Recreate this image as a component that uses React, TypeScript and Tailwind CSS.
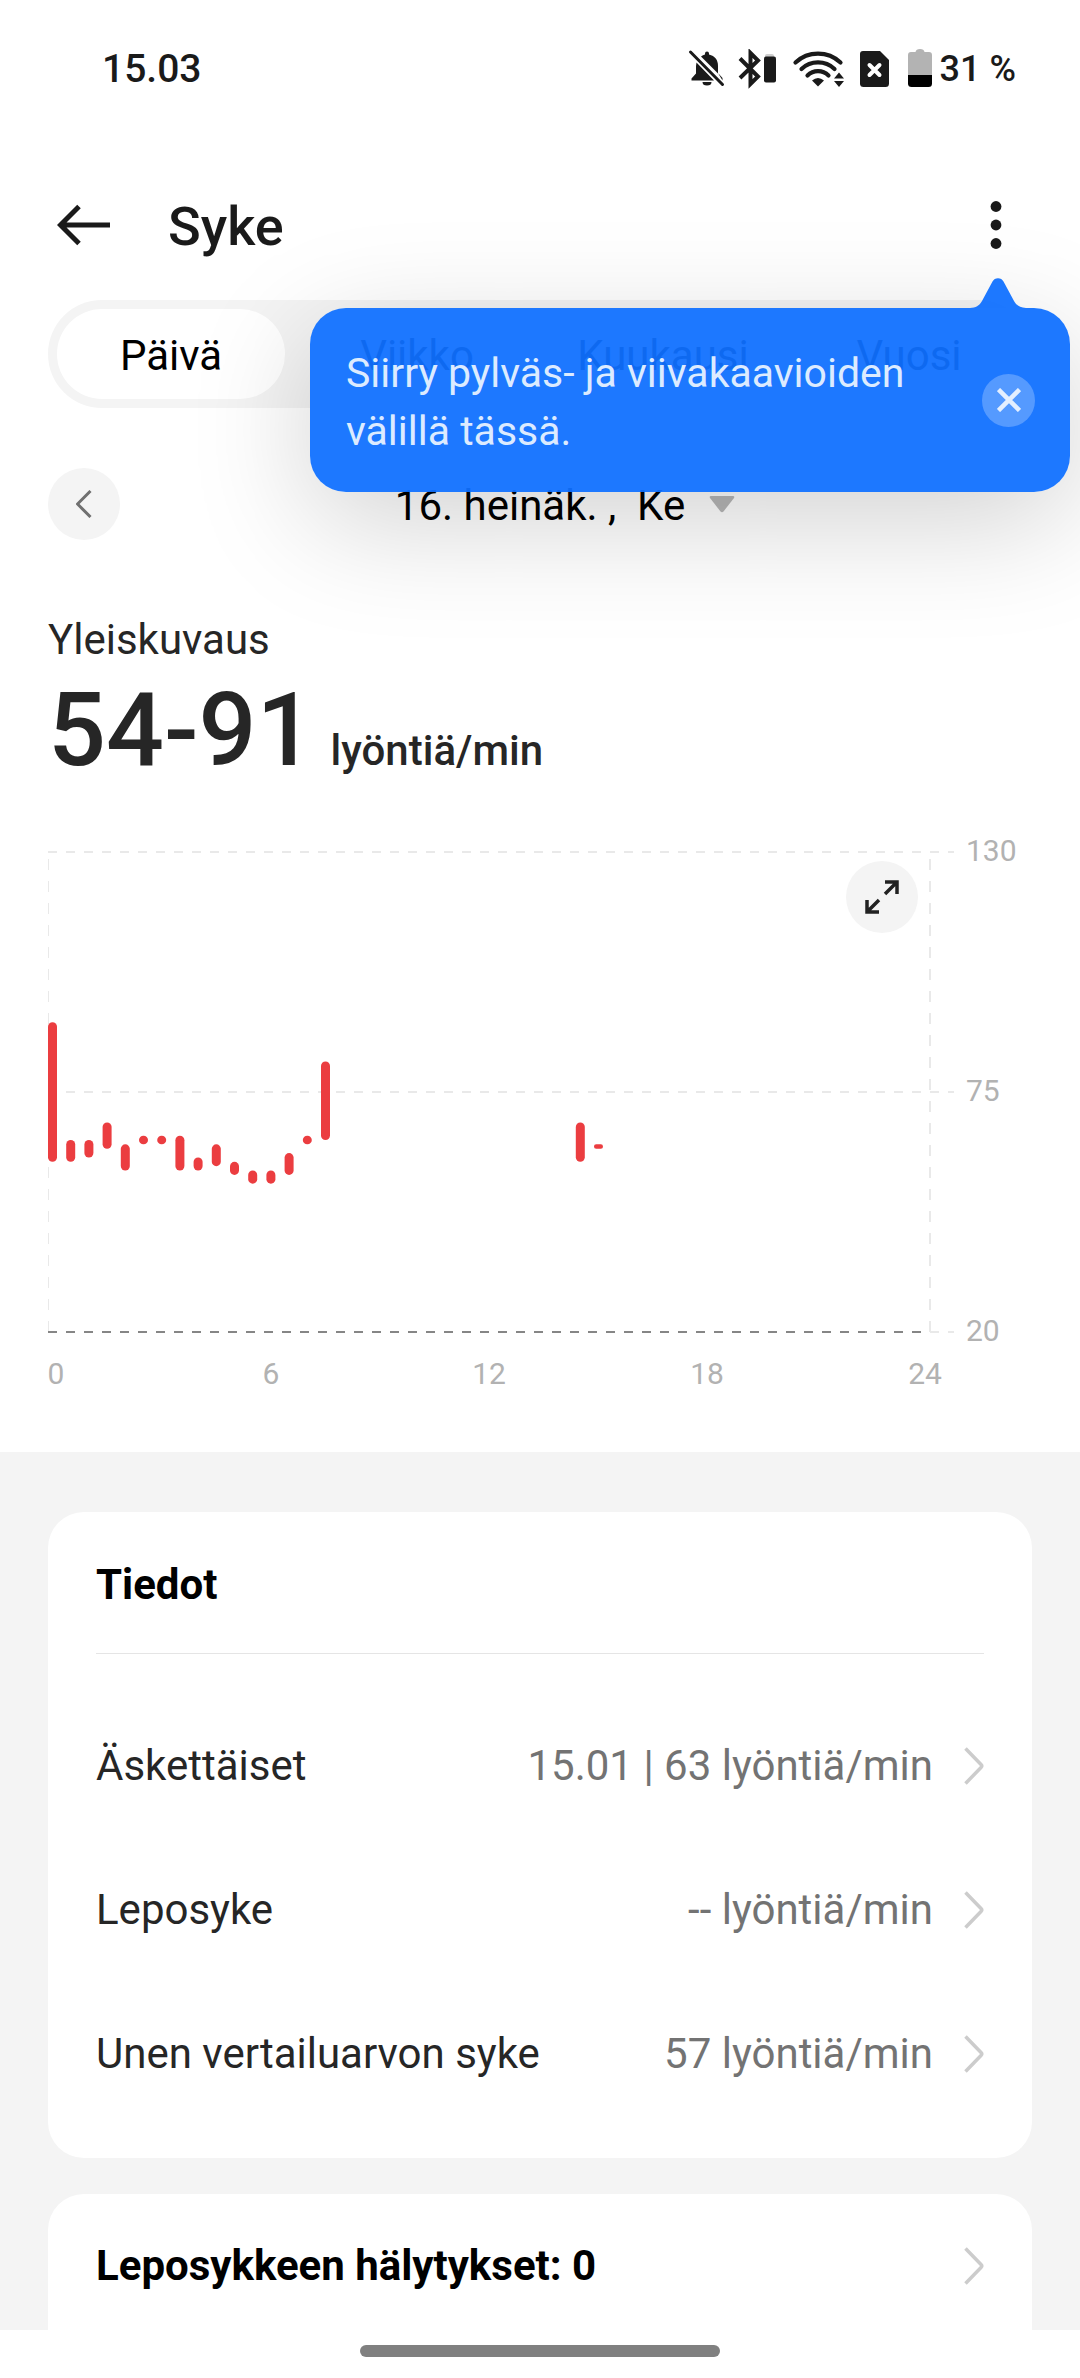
import React, { useState } from "react";

type Reading = { slot: number; max: number; min: number };

// One slot is half an hour
const readings: Reading[] = [
  { slot: 0, max: 91, min: 59 },
  { slot: 1, max: 64, min: 59 },
  { slot: 2, max: 64, min: 60 },
  { slot: 3, max: 68, min: 62 },
  { slot: 4, max: 63, min: 57 },
  { slot: 5, max: 65, min: 63 },
  { slot: 6, max: 65, min: 63 },
  { slot: 7, max: 65, min: 57 },
  { slot: 8, max: 60, min: 57 },
  { slot: 9, max: 63, min: 58 },
  { slot: 10, max: 59, min: 56 },
  { slot: 11, max: 57, min: 54 },
  { slot: 12, max: 57, min: 54 },
  { slot: 13, max: 61, min: 56 },
  { slot: 14, max: 65, min: 63 },
  { slot: 15, max: 82, min: 64 },
  { slot: 29, max: 68, min: 59 },
  { slot: 30, max: 63, min: 62 },
];

const tabs = ["Päivä", "Viikko", "Kuukausi", "Vuosi"];

const details = [
  { label: "Äskettäiset", value: "15.01 | 63 lyöntiä/min" },
  { label: "Leposyke", value: "-- lyöntiä/min" },
  { label: "Unen vertailuarvon syke", value: "57 lyöntiä/min" },
];

const CHART_TOP = 20;
const CHART_HEIGHT = 480;

const yFor = (bpm: number) => CHART_TOP + ((130 - bpm) / 110) * CHART_HEIGHT;
const xFor = (slot: number) => 4.5 + slot * 18.2;

function StatusBar() {
  return (
    <div className="flex h-[150px] items-center justify-between pr-16 pb-3 pl-[102px] font-medium text-[#1a1a1a]">
      <span className="text-[39px]">15.03</span>
      <div className="flex items-center text-[36px]">
        <svg width="245" height="40" viewBox="0 0 245 40" fill="#1a1a1a">
          {/* Muted bell */}
          <path d="M14 7.500 Q16 6 18 5.500 V4.500 a2 2 0 0 1 4 0 V5.500 C28 7 31 11 31 17 V24.500z" />
          <path d="M9.500 13.500 L27 31.500 H4.500 V29.500 L9 24.500 V17z" />
          <path d="M31 24 L35.500 29 V31.500z" />
          <path d="M15.500 33h9a4.500 3.500 0 0 1-9 0z" />
          <path d="M3.500 3 L35.500 35.500" stroke="#1a1a1a" strokeWidth="3" strokeLinecap="round" />
          {/* Bluetooth with device battery */}
          <path
            d="M53 9.500 L71 27.500 L63.500 35 V4 L71 11.500 L53 29"
            fill="none"
            stroke="#1a1a1a"
            strokeWidth="4"
          />
          <rect x="78" y="5" width="9" height="5" rx="2" fill="#cfcfcf" />
          <rect x="77" y="7.500" width="12" height="26" rx="2" />
          {/* Wifi */}
          <g fill="none" stroke="#1a1a1a" strokeWidth="4.200" strokeLinecap="round">
            <path d="M108.500 13.500 A33 33 0 0 1 153.500 13.500" />
            <path d="M114.500 20 A24 24 0 0 1 147.500 20" />
            <path d="M120.500 26.500 A15 15 0 0 1 141.500 26.500" />
          </g>
          <path d="M125 31.500 Q131 26.500 137 31.500 L131 37.500z" />
          <path d="M152 23.500 l5 6h-10z M152 38 l5-6h-10z" />
          {/* Sim card */}
          <path d="M176 2h17l9 9v23.500a3.500 3.500 0 0 1-3.500 3.500H176.500a3.500 3.500 0 0 1-3.500-3.500V5a3 3 0 0 1 3-3z" />
          <path d="M182.500 16 l10 10 M192.500 16 l-10 10" stroke="#fff" strokeWidth="4" strokeLinecap="round" />
          {/* Battery */}
          <path d="M221 26 V6a3 3 0 0 1 3-3h4.500q.5-3 4.500-3t4.500 3h4.500a3 3 0 0 1 3 3v20z" fill="#b3b3b3" />
          <path d="M221 26h24v8.500a3.500 3.500 0 0 1-3.500 3.500h-17a3.500 3.500 0 0 1-3.500-3.500z" fill="#000" />
        </svg>
        <span className="ml-2">31 %</span>
      </div>
    </div>
  );
}

function Tooltip({ onClose }: { onClose: () => void }) {
  return (
    <div
      role="tooltip"
      className="absolute top-[158px] right-2.5 flex w-[760px] items-center justify-between rounded-[36px] bg-[rgba(15,112,255,0.94)] pt-9 pr-[35px] pb-8 pl-9 shadow-[0_30px_120px_rgba(0,0,0,0.18)]"
    >
      <svg className="absolute right-[44px] bottom-full" width="56" height="30" viewBox="0 0 56 30">
        <path
          d="M0 30 C6 29.500 9 28 12 23 L22.500 3.500 C24.500 -1 31.500 -1 33.500 3.500 L44 23 C47 28 50 29.500 56 30z"
          fill="rgba(15,112,255,0.94)"
        />
      </svg>
      <p className="text-[41px] leading-[58px] text-[#dcebff]">
        Siirry pylväs- ja viivakaavioiden
        <br />
        välillä tässä.
      </p>
      <button
        type="button"
        aria-label="Sulje"
        onClick={onClose}
        className="mb-1 flex size-[53px] shrink-0 items-center justify-center rounded-full bg-white/25"
      >
        <svg width="24" height="24" viewBox="0 0 24 24" stroke="#e4efff" strokeWidth="4.500">
          <path d="M1.500 1.500 L22.500 22.500 M22.500 1.500 L1.500 22.500" />
        </svg>
      </button>
    </div>
  );
}

function HeartRateChart() {
  return (
    <div className="relative mt-[42px]">
      <svg viewBox="0 0 984 560" className="h-auto w-full" role="img" aria-label="Syke">
        <g stroke="#e9e9e9" strokeWidth="2" strokeDasharray="9 9">
          <path d="M0 20 H906" />
          <path d="M0 260 H906" />
          <path d="M882 500 H906" />
        </g>
        <g stroke="#e9e9e9" strokeDasharray="11 11">
          <path d="M0.500 27 V500" strokeWidth="1" />
          <path d="M882 27 V500" strokeWidth="2" />
        </g>
        <path d="M0 500 H873" stroke="#868686" strokeWidth="2" strokeDasharray="9 9" />

        {readings.map((r) => {
          const height = yFor(r.min) - yFor(r.max);
          return (
            <rect
              key={r.slot}
              x={xFor(r.slot) - 4.5}
              y={yFor(r.max)}
              width="9"
              height={height}
              rx={Math.min(4.5, height / 2)}
              fill="#eb3d40"
            />
          );
        })}

        <g fontSize="30" fill="#b2b2b2">
          <text x="918" y="29">130</text>
          <text x="918" y="269">75</text>
          <text x="918" y="509">20</text>
        </g>
        <g fontSize="30" fill="#b2b2b2" textAnchor="middle">
          <text x="8" y="552">0</text>
          <text x="223" y="552">6</text>
          <text x="441" y="552">12</text>
          <text x="659" y="552">18</text>
          <text x="877" y="552">24</text>
        </g>
      </svg>
      <button
        type="button"
        aria-label="Laajenna"
        className="absolute top-[29px] right-[114px] flex size-[72px] items-center justify-center rounded-full bg-[#f4f4f4]"
      >
        <svg width="34" height="34" viewBox="0 0 34 34" fill="none" stroke="#222" strokeWidth="3.500">
          <path d="M20 2 H32 V14 M32 2 L20 14" />
          <path d="M2 20 V32 H14 M2 32 L14 20" />
        </svg>
      </button>
    </div>
  );
}

function Chevron() {
  return (
    <svg className="shrink-0" width="20" height="38" viewBox="0 0 20 38" fill="none" stroke="#cccccc" strokeWidth="3.500">
      <path d="M1.500 1.500 L17 17.500 Q18.500 19 17 20.500 L1.500 36.500" />
    </svg>
  );
}

export default function App() {
  const [activeTab, setActiveTab] = useState("Päivä");
  const [showTip, setShowTip] = useState(true);

  return (
    <div className="flex min-h-screen flex-col bg-white font-[Roboto,sans-serif] text-[42px] leading-[50px] text-[#262626]">
      <StatusBar />

      <header className="relative z-10 flex h-[150px] items-center pr-[72px] pl-[57px]">
        <button type="button" aria-label="Takaisin">
          <svg width="54" height="42" viewBox="0 0 54 42" fill="none" stroke="#1a1a1a" strokeWidth="5">
            <path d="M53 21 H5 M22 2.500 L3.500 21 L22 39.500" />
          </svg>
        </button>
        <h1 className="ml-[57px] grow pt-1 text-[54px] leading-[64px] font-medium text-[#1a1a1a]">Syke</h1>
        <button type="button" aria-label="Valikko">
          <svg width="24" height="54" viewBox="0 0 24 54" fill="#1a1a1a">
            <circle cx="12" cy="8.500" r="5.400" />
            <circle cx="12" cy="27" r="5.400" />
            <circle cx="12" cy="45.500" r="5.400" />
          </svg>
        </button>
        {showTip && <Tooltip onClose={() => setShowTip(false)} />}
      </header>

      <main className="flex grow flex-col">
        <section className="px-12 pb-[60px]">
          <div role="tablist" className="flex gap-[18px] rounded-full bg-[#f4f4f4] p-[9px] text-black">
            {tabs.map((tab) => (
              <button
                key={tab}
                type="button"
                role="tab"
                aria-selected={activeTab === tab}
                onClick={() => setActiveTab(tab)}
                className={
                  activeTab === tab
                    ? "h-[90px] flex-1 basis-0 rounded-full bg-white pt-1"
                    : "h-[90px] flex-1 basis-0 rounded-full pt-1"
                }
              >
                {tab}
              </button>
            ))}
          </div>

          {/* Date picker */}
          <div className="mt-[60px] grid grid-cols-[72px_1fr_72px] items-center">
            <button
              type="button"
              aria-label="Edellinen päivä"
              className="flex size-[72px] items-center justify-center rounded-full bg-[#f4f4f4]"
            >
              <svg width="16" height="28" viewBox="0 0 16 28" fill="none" stroke="#707070" strokeWidth="3">
                <path d="M14.500 1 L1.500 14 L14.500 27" />
              </svg>
            </button>
            <button type="button" className="flex items-center justify-center pl-[50px] text-black">
              <span className="pt-1 whitespace-pre">16. heinäk. ,  Ke</span>
              <svg className="ml-6" width="26" height="18" viewBox="0 0 26 18" fill="#b8b8b8">
                <path d="M2 1h22q2 0 1 2L14.500 16.500q-1.500 1.500-3 0L1 3q-1-2 1-2z" />
              </svg>
            </button>
          </div>

          <p className="mt-[75px]">Yleiskuvaus</p>
          <p className="mt-[5px] flex items-baseline gap-4 font-medium">
            <span className="text-[102px] leading-[120px]">54-91</span>
            <span>lyöntiä/min</span>
          </p>

          <HeartRateChart />
        </section>

        <div className="grow bg-[#f4f4f4] px-12 pt-[60px]">
          <section className="rounded-[36px] bg-white px-12 pb-8">
            <h2 className="flex h-[142px] items-center border-b border-[#e5e5e5] pt-1 font-bold text-black">Tiedot</h2>
            <ul className="pt-10">
              {details.map((item) => (
                <li key={item.label}>
                  <a href="#" className="flex h-[144px] items-center">
                    <span className="grow">{item.label}</span>
                    <span className="mr-[31px] text-[#737373]">{item.value}</span>
                    <Chevron />
                  </a>
                </li>
              ))}
            </ul>
          </section>

          <section className="mt-9 rounded-t-[36px] bg-white px-12">
            <a href="#" className="flex h-[136px] items-center pt-2 font-bold text-black">
              <span className="grow">Leposykkeen hälytykset: 0</span>
              <Chevron />
            </a>
          </section>
        </div>
      </main>

      {/* Gesture bar */}
      <div className="flex h-12 items-center justify-center bg-white pb-1.5">
        <div className="h-3 w-1/3 rounded-full bg-[#808080]" />
      </div>
    </div>
  );
}
